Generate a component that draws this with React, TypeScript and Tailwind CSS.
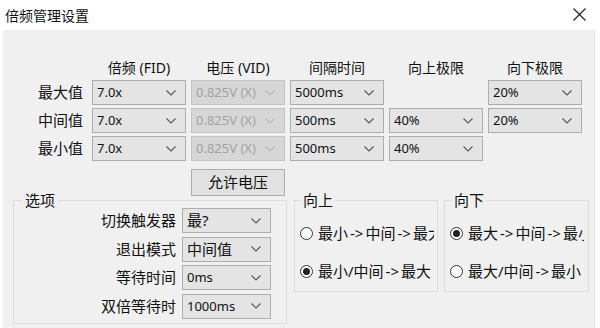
import React from "react";

const FONT = { fontFamily: '"Noto Sans", "Noto Sans CJK SC", sans-serif' };

function Chevron({ color }: { color: string }) {
    return (
        <svg width="10" height="6" viewBox="0 0 10 6" className="shrink-0">
            <polyline points="0.5,0.5 5,5 9.5,0.5" fill="none" stroke={color} strokeWidth="1.1" />
        </svg>
    );
}

function Combo({ value, disabled = false, cjk = false }: { value: string; disabled?: boolean; cjk?: boolean }) {
    return (
        <div
            className={
                disabled
                    ? "h-[25px] flex items-center justify-between pl-[4px] pr-[9px] border border-[#c4c4c4] bg-[#d6d6d6] text-[#a2a2a2] text-[13px]"
                    : "h-[25px] flex items-center justify-between pl-[4px] pr-[9px] border border-[#adadad] bg-[#e4e4e4] text-[#111] " +
                      (cjk ? "text-[15px]" : "text-[13px]")
            }
        >
            <span className="whitespace-nowrap leading-none">{value}</span>
            <Chevron color={disabled ? "#b8b8b8" : "#555"} />
        </div>
    );
}

function Radio({ checked, label }: { checked: boolean; label: string }) {
    const parts = label.split("->");
    return (
        <div className="h-[20px] w-[134px] flex items-center gap-[5px] overflow-hidden">
            <span className="w-[13px] h-[13px] shrink-0 rounded-full border border-[#333] bg-white flex items-center justify-center">
                {checked && <span className="w-[7px] h-[7px] rounded-full bg-[#222]" />}
            </span>
            <span className="whitespace-nowrap text-[15px] text-[#111] leading-none">
                {parts.map((p, i) => (
                    <React.Fragment key={i}>
                        {i > 0 && <span className="mx-[2px]">-&gt;</span>}
                        {p}
                    </React.Fragment>
                ))}
            </span>
        </div>
    );
}

const headers = ["倍频 (FID)", "电压 (VID)", "间隔时间", "向上极限", "向下极限"];

export default function App() {
    return (
        <div className="w-[600px] h-[328px] bg-white overflow-hidden" style={FONT}>
            {/* Title bar */}
            <div className="h-[30px] flex items-center justify-between pl-[5px] pr-[14px]">
                <span className="text-[14px] text-[#111]">倍频管理设置</span>
                <svg width="13" height="13" viewBox="0 0 13 13" className="-mt-[2px]">
                    <path d="M0.5 0.5L12.5 12.5M12.5 0.5L0.5 12.5" stroke="#222" strokeWidth="1.2" />
                </svg>
            </div>

            {/* Panel */}
            <div className="ml-[3px] w-[592px] h-[298px] bg-[#f0f0f0] border-r border-[#e2e2e2]">
                <div className="grid grid-cols-[84px_repeat(5,94px)] gap-x-[5px] gap-y-[3px] pt-[28px] text-[#111]">
                    <div />
                    {headers.map((h) => (
                        <div key={h} className="h-[19px] flex items-center justify-center text-[14px] whitespace-nowrap">
                            {h}
                        </div>
                    ))}

                    {/* 最大值 */}
                    <div className="h-[25px] flex items-center justify-end pr-[4px] text-[15px]">最大值</div>
                    <Combo value="7.0x" />
                    <Combo value="0.825V (X)" disabled />
                    <Combo value="5000ms" />
                    <div />
                    <Combo value="20%" />

                    {/* 中间值 */}
                    <div className="h-[25px] flex items-center justify-end pr-[4px] text-[15px]">中间值</div>
                    <Combo value="7.0x" />
                    <Combo value="0.825V (X)" disabled />
                    <Combo value="500ms" />
                    <Combo value="40%" />
                    <Combo value="20%" />

                    {/* 最小值 */}
                    <div className="h-[25px] flex items-center justify-end pr-[4px] text-[15px]">最小值</div>
                    <Combo value="7.0x" />
                    <Combo value="0.825V (X)" disabled />
                    <Combo value="500ms" />
                    <Combo value="40%" />
                    <div />

                    <button className="col-start-3 mt-[5px] h-[27px] border border-[#adadad] bg-[#e1e1e1] text-[15px] text-[#111] flex items-center justify-center">
                        允许电压
                    </button>
                </div>

                {/* Bottom groups */}
                <div className="flex items-start ml-[10px]">
                    <fieldset className="w-[274px] h-[128px] border border-[#dcdcdc]">
                        <legend className="ml-[9px] px-[2px] text-[15px] leading-[8px] text-[#111]">选项</legend>
                        <div className="grid grid-cols-[156px_89px] gap-x-[6px] gap-y-[3.5px] pl-[6px] pt-[4px] text-[#111]">
                            <div className="h-[25px] flex items-center justify-end text-[15px]">切换触发器</div>
                            <Combo value="最?" cjk />
                            <div className="h-[25px] flex items-center justify-end text-[15px]">退出模式</div>
                            <Combo value="中间值" cjk />
                            <div className="h-[25px] flex items-center justify-end text-[15px]">等待时间</div>
                            <Combo value="0ms" />
                            <div className="h-[25px] flex items-center justify-end text-[15px]">双倍等待时</div>
                            <Combo value="1000ms" />
                        </div>
                    </fieldset>

                    <fieldset className="ml-[7px] w-[144px] h-[96px] border border-[#dcdcdc]">
                        <legend className="ml-[6px] px-[2px] text-[15px] leading-[8px] text-[#111]">向上</legend>
                        <div className="flex flex-col gap-[18px] pl-[5px] pt-[19px]">
                            <Radio checked={false} label="最小->中间->最大" />
                            <Radio checked label="最小/中间->最大" />
                        </div>
                    </fieldset>

                    <fieldset className="ml-[6px] w-[145px] h-[96px] border border-[#dcdcdc]">
                        <legend className="ml-[7px] px-[2px] text-[15px] leading-[8px] text-[#111]">向下</legend>
                        <div className="flex flex-col gap-[18px] pl-[5px] pt-[19px]">
                            <Radio checked label="最大->中间->最小" />
                            <Radio checked={false} label="最大/中间->最小" />
                        </div>
                    </fieldset>
                </div>
            </div>
        </div>
    );
}
